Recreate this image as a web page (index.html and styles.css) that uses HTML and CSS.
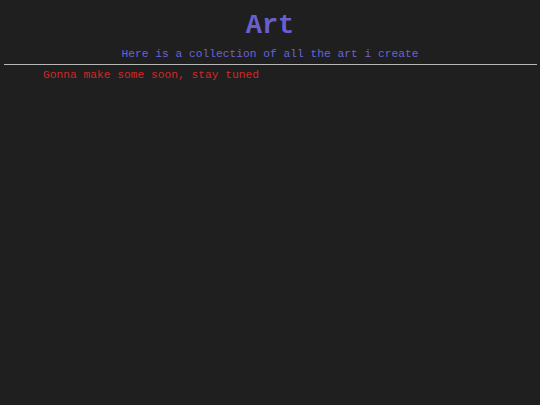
FILE: index.html
```html
<!DOCTYPE html>
<html>
<head>
<meta charset="utf-8">
<link rel="stylesheet" href="styles.css">
</head>
<body>
<header class="head">
<h1 class="title">Art</h1>
<p class="subtitle">Here is a collection of all the art i create</p>
</header>
<hr class="rule">
<main class="content">
<p class="note">Gonna make some soon, stay tuned</p>
</main>
</body>
</html>
```
FILE: styles.css
```css
html, body {
  margin: 0;
  padding: 0;
  background: #1f1f1f;
  height: 100%;
}
body {
  font-family: "Liberation Mono", "DejaVu Sans Mono", monospace;
}
.head {
  display: flex;
  flex-direction: column;
  align-items: center;
  padding-top: 12px;
}
.title {
  margin: 0;
  font-size: 27px;
  line-height: 28px;
  font-weight: bold;
  color: #6a5fd0;
}
.subtitle {
  margin: 7px 0 0 0;
  font-size: 11.25px;
  line-height: 14px;
  color: #6a63d6;
}
.rule {
  margin: 3px 3px 0 4px;
  border: 0;
  height: 1px;
  background: #b8b8b8;
}
.content {
  padding: 3px 0 0 43px;
}
.note {
  margin: 0;
  font-size: 11.25px;
  line-height: 14px;
  color: #d02828;
}
```
